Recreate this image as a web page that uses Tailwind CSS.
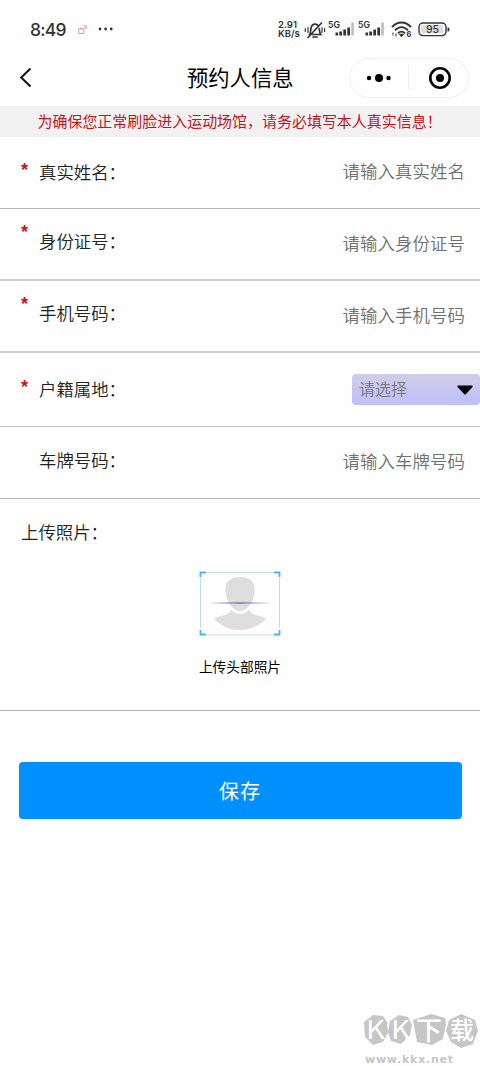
<!DOCTYPE html>
<html lang="zh-CN">
<head>
<meta charset="utf-8">
<title>预约人信息</title>
<script src="https://cdn.jsdelivr.net/npm/@tailwindcss/browser@4"></script>
</head>
<body class="relative flex h-[1066px] w-[480px] flex-col overflow-hidden bg-[#fefefe] font-['Noto_Sans_CJK_SC',sans-serif] text-[#222]">
<!-- status bar -->
<header class="flex h-[49px] shrink-0 items-start pt-[18px] pl-[30px] font-['Inter','Noto_Sans_CJK_SC',sans-serif] text-[#333]">
  <span class="w-[48px] text-[17.5px] leading-[23px] font-medium tracking-[-0.8px]">8:49</span>
  <svg class="mt-[6px] h-[11px] w-[10px]" viewBox="0 0 10 11" fill="none" stroke="#d99aa2" stroke-width="1"><path d="M.8 4.500h5v5h-5zM3 4.500V6M5.500 1.500l3 .5-.5 3M8.500 2 6 4.500"/></svg>
  <svg class="mt-[9px] ml-[10px] h-[4px] w-[16px]" viewBox="0 0 16 4" fill="#333"><circle cx="2" cy="2" r="1.400"/><circle cx="7.600" cy="2" r="1.400"/><circle cx="13.200" cy="2" r="1.400"/></svg>
  <div class="ml-[164px] w-[26px] pt-[2px] text-[9.500px] leading-[9px] font-semibold whitespace-nowrap"><div>2.91</div><div>KB/s</div></div>
  <svg class="mt-[2px] h-[20px] w-[22px]" viewBox="0 0 22 20" fill="none" stroke="#333" stroke-width="1.700" stroke-linecap="round"><path d="M5.500 14.500c1.500-1.500 1-4 1.400-6C7.500 5.500 9 4.200 11 4.200c1 0 2 .4 2.700 1M15.300 8.500c.2 2.500 0 4.500 1.500 6H8.500M9 17h4M4 17.500 17.500 3"/><path d="M4 7.500v5M1.300 8.500v3M18 7.500v5M20.600 8.500v3" stroke-width="1.200"/></svg>
  <svg class="ml-px h-[20px] w-[59px]" viewBox="0 0 59 20" fill="#333"><g font-family="Inter" font-size="8.700" font-weight="600"><text x="1" y="10">5G</text><text x="31" y="10">5G</text></g>
    <g id="bars"><path d="M8.500 14.500h2.600v3H8.500zM12.300 13.500h2.700v4h-2.700zM16.300 11.500h2.700v6h-2.700zM20.300 9.500h2.700v8h-2.700z"/><path fill="#bbb" d="M24.300 4.500h2.500v13h-2.500z"/></g><use href="#bars" x="30"/></svg>
  <svg class="mt-[3px] ml-[5px] h-[17px] w-[22px]" viewBox="0 0 22 17" fill="none" stroke="#333" stroke-width="1.900"><path d="M1 6.200C6.500 0 14.500 0 20 6.200M4 9.300c4-4.300 9-4.300 13 0M7 12.300c2-2.300 5-2.300 7 0"/><path d="M8.500 13.300h4l-2 2.500zM2 11.500v3M5 12.500v3" fill="#333" stroke-width="1"/><text x="15.500" y="16.300" font-family="Inter" font-size="7.500" font-weight="700" fill="#333" stroke="none">6</text></svg>
  <svg class="mt-[4px] ml-[5px] h-[15px] w-[33px]" viewBox="0 0 33 15"><rect x="1" y="1" width="27" height="12.600" rx="4" fill="#fff" stroke="#333" stroke-width="1.400"/><rect x="3" y="3" width="22" height="8.600" rx="2" fill="#ddd"/><path d="M29.500 5.500h1q1 0 1 2t-1 2h-1z" fill="#333"/><text x="14.500" y="11.200" text-anchor="middle" font-family="Inter" font-size="10.500" font-weight="500" fill="#333">95</text></svg>
</header>
<!-- navigation bar -->
<nav class="flex h-[57px] shrink-0 items-center pr-[11px] pl-[19px]">
  <svg class="h-[22px] w-[14px]" viewBox="0 0 14 22" fill="none" stroke="#111" stroke-width="2"><path d="M11.500 1.500 2.200 10.500l9.300 9"/></svg>
  <h1 class="-mt-[2px] ml-[154px] w-[162px] text-[21.300px] leading-[30px] whitespace-nowrap text-black">预约人信息</h1>
  <div class="flex h-[40px] w-[120px] items-center rounded-full border border-[#f0f0f0]">
    <svg class="ml-[16px] h-[10px] w-[27px]" viewBox="0 0 27 10"><circle cx="3" cy="5" r="2.200"/><circle cx="13" cy="5" r="4"/><circle cx="22.500" cy="5" r="2.200"/></svg>
    <span class="ml-[15px] h-[25px] w-px bg-[#eee]"></span>
    <svg class="ml-[19px] h-[24px] w-[24px]" viewBox="0 0 24 24"><circle cx="12" cy="12" r="9.700" fill="none" stroke="#000" stroke-width="2.600"/><circle cx="12" cy="12" r="4"/></svg>
  </div>
</nav>
<p class="h-[31px] shrink-0 bg-[#f1f1f1] pl-[37.500px] text-[14.970px] leading-[30px] whitespace-nowrap text-[#c3161c]">为确保您正常刷脸进入运动场馆，请务必填写本人真实信息<span class="inline-block">！</span></p>
<main class="shrink-0 text-[17.400px] leading-[26px] font-[350]">
  <div class="flex h-[72px] items-start border-b border-[#b5b5b5] pr-[15px] pl-[21px]">
    <span class="mt-[20px] w-[18px] font-['Liberation_Sans'] text-[18px] leading-[26px] text-[#c3161c] font-bold">*</span><label class="mt-[22px]">真实姓名<span class="inline-block">：</span></label><span class="mt-[21px] ml-auto text-[#707070] tracking-[.1px]">请输入真实姓名</span>
  </div>
  <div class="flex h-[72px] items-start border-b-2 border-[#cecece] pr-[15px] pl-[21px]">
    <span class="mt-[10px] w-[18px] font-['Liberation_Sans'] text-[18px] leading-[26px] text-[#c3161c] font-bold">*</span><label class="mt-[19px]">身份证号<span class="inline-block">：</span></label><span class="mt-[21px] ml-auto text-[#707070] tracking-[.1px]">请输入身份证号</span>
  </div>
  <div class="flex h-[72px] items-start border-b-2 border-[#cecece] pr-[15px] pl-[21px]">
    <span class="mt-[10px] w-[18px] font-['Liberation_Sans'] text-[18px] leading-[26px] text-[#c3161c] font-bold">*</span><label class="mt-[19px]">手机号码<span class="inline-block">：</span></label><span class="mt-[21px] ml-auto text-[#707070] tracking-[.1px]">请输入手机号码</span>
  </div>
  <div class="flex h-[74px] items-start border-b border-[#bfbfbf] pl-[21px]">
    <span class="mt-[21px] w-[18px] font-['Liberation_Sans'] text-[18px] leading-[26px] text-[#c3161c] font-bold">*</span><label class="mt-[23px]">户籍属地<span class="inline-block">：</span></label>
    <div class="mt-[21px] ml-auto flex h-[31px] w-[128px] items-center justify-between rounded-[4px] bg-linear-to-b from-[#d0cde9] to-[#bfbffb] pr-[7px] pl-[7px] text-[16px] text-[#777]"><span class="-mt-[3px]">请选择</span><svg class="h-[10px] w-[16px]" viewBox="0 0 16 10"><path d="M.5.5h15v1.500L8.500 9.500h-1L.5 2z"/></svg></div>
  </div>
  <div class="flex h-[72px] items-start border-b border-[#b5b5b5] pr-[15px] pl-[39px]">
    <label class="mt-[20px]">车牌号码<span class="inline-block">：</span></label><span class="mt-[21px] ml-auto text-[#707070] tracking-[.1px]">请输入车牌号码</span>
  </div>
  <section class="flex h-[212px] flex-col items-center border-b border-[#b5b5b5]">
    <h2 class="mt-[20px] self-start pl-[21px]">上传照片<span class="inline-block">：</span></h2>
    <svg class="mt-[26px] h-[65px] w-[82px]" viewBox="0 0 82 65" fill="none">
      <path d="M26.500 18C26.500 9 33 6 41 6s14.500 3 14.500 12c0 9-3 15-8 19.500q-6.500 5-13 0c-5-4.500-8-10.500-8-19.500z" fill="#dedede"/>
      <path d="M32 39C29 45 20 44 15 48c8 8 17 11 26 11s18-3 26-11C62 44 53 45 50 39q-9 8-18 0z" fill="#dedede"/>
      <path d="M1.500 7v50M80.500 7v50M7 1.500h68M7 64h68" stroke="#b9def0"/>
      <path d="M1.500 6V1.500H7M75 1.500h5.500V6M1.500 59v4.500H7M75 63.500h5.500V59" stroke="#51b3df" stroke-width="1.800"/>
      <path d="m9 32 32-.9 32 .9-32 .9z" fill="#8d93c8"/>
    </svg>
    <span class="mt-[20px] text-[13.700px] leading-[20px] font-normal text-black">上传头部照片</span>
  </section>
</main>
<button class="mx-[18.500px] mt-[51px] h-[57px] shrink-0 rounded-[4px] bg-[#0190ff] text-[20px] tracking-[1px] text-white">保存</button>
<!-- site watermark -->
<svg class="absolute top-[1011px] left-[362px] h-[55px] w-[118px]" viewBox="0 0 118 55">
  <g fill="#c6c6c6"><path d="m2 11 9-7 10 1 4 6 1 11-5 9-10 3-8-8z"/><path d="m28 10 9-6 9 2 4 8-2 10-9 9-10-3-3-9z"/><path d="m51 9 18-6 14 4 1 6-3 15-11 6-15-3z"/><path d="m87 9 12-6 14 6 3 11-5 13-12 4-10-6-5-11z"/></g>
  <g fill="#fff" font-family="'Noto Sans CJK SC',sans-serif" font-weight="500"><text x="4" y="28" font-size="25" font-weight="400" textLength="19" lengthAdjust="spacingAndGlyphs">K</text><text x="29" y="28" font-size="25" font-weight="400" textLength="19" lengthAdjust="spacingAndGlyphs">K</text><text x="54" y="29" font-size="26">下</text><text x="88" y="28" font-size="24">载</text></g>
  <text x="3" y="52" font-family="'DejaVu Sans',sans-serif" font-size="11" font-weight="700" fill="#c6c6c6" textLength="88">www.kkx.net</text>
</svg>
</body>
</html>
